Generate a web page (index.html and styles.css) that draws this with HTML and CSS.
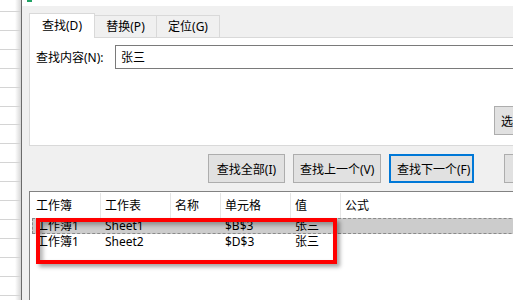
FILE: index.html
```html
<!DOCTYPE html>
<html lang="zh-CN">
<head>
    <meta charset="UTF-8">
    <meta name="viewport" content="width=device-width, initial-scale=1.0">
    <title>查找和替换</title>
    <link rel="stylesheet" href="styles.css">
</head>
<body>

    <div class="sheet"></div>

    <div class="dialog">
        <div class="titlebar"><span class="app-icon"></span></div>

        <div class="tabs">
            <div class="tab active">查找(D)</div>
            <div class="tab">替换(P)</div>
            <div class="tab tab-wide">定位(G)</div>
        </div>

        <div class="panel">
            <div class="find-row">
                <label for="find-what">查找内容(N):</label>
                <input type="text" id="find-what" value="张三">
            </div>
            <div class="options-row">
                <button class="btn">选项(T) &gt;&gt;</button>
            </div>
        </div>

        <div class="actions">
            <button class="btn btn-all">查找全部(I)</button>
            <button class="btn btn-prev">查找上一个(V)</button>
            <button class="btn btn-next">查找下一个(F)</button>
            <button class="btn btn-close">关闭</button>
        </div>

        <div class="results">
            <div class="list-head">
                <div class="col c1">工作簿</div>
                <div class="col c2">工作表</div>
                <div class="col c3">名称</div>
                <div class="col c4">单元格</div>
                <div class="col c5">值</div>
                <div class="col c6">公式</div>
            </div>
            <div class="list-row selected">
                <div class="col c1">工作簿1</div>
                <div class="col c2">Sheet1</div>
                <div class="col c3"></div>
                <div class="col c4">$B$3</div>
                <div class="col c5">张三</div>
                <div class="col c6"></div>
            </div>
            <div class="list-row">
                <div class="col c1">工作簿1</div>
                <div class="col c2">Sheet2</div>
                <div class="col c3"></div>
                <div class="col c4">$D$3</div>
                <div class="col c5">张三</div>
                <div class="col c6"></div>
            </div>
            <div class="mark"></div>
        </div>
    </div>

</body>
</html>
```

FILE: styles.css
```css
* {
    box-sizing: border-box;
    margin: 0;
    padding: 0;
}

body {
    display: flex;
    width: 513px;
    height: 300px;
    overflow: hidden;
    background: #ffffff;
    font-family: "Noto Sans", "Noto Sans CJK SC", sans-serif;
    font-size: 12px;
    color: #000000;
}

/* spreadsheet peeking out on the left */
.sheet {
    flex: 0 0 22px;
    border-right: 1px solid #6b6b6b;
    background:
        linear-gradient(to right, rgba(255, 255, 255, 0) 15px, #d6d6d6 21px),
        repeating-linear-gradient(to bottom, #ffffff 0, #ffffff 11px, #d4d4d4 11px, #d4d4d4 12px, #ffffff 12px, #ffffff 18.9px);
}

.dialog {
    flex: 0 0 620px;
    display: flex;
    flex-direction: column;
    background: #f0f0f0;
    padding-left: 7px;
}

.titlebar {
    height: 6px;
    margin-left: -7px;
    padding-left: 5px;
    background: #ffffff;
}

.app-icon {
    display: block;
    width: 5px;
    height: 2px;
    background: #21a366;
}

.tabs {
    display: flex;
    align-items: flex-end;
    height: 24px;
    margin-top: 7px;
}

.tab {
    width: 62px;
    height: 22px;
    line-height: 21px;
    text-align: center;
    border: 1px solid #d9d9d9;
    border-bottom: none;
    border-left: none;
    background: #f0f0f0;
}

.tab-wide {
    width: 63px;
}

.tab.active {
    position: relative;
    width: 66px;
    height: 25px;
    margin-bottom: -1px;
    line-height: 24px;
    border-left: 1px solid #d9d9d9;
    background: #ffffff;
}

.panel {
    background: #ffffff;
    border: 1px solid #d9d9d9;
    padding: 7px 0 10px 0;
}

.find-row {
    display: flex;
    align-items: center;
}

.find-row label {
    width: 85px;
    padding-left: 6px;
}

.find-row input {
    flex: 1;
    height: 24px;
    border: 1px solid #7a7a7a;
    padding: 0 5px;
    font: inherit;
    outline: none;
}

.options-row {
    display: flex;
    margin-top: 37px;
    padding-left: 464px;
}

.btn {
    height: 29px;
    padding: 0 6px;
    border: 1px solid #adadad;
    background: #e1e1e1;
    font: inherit;
    color: #000000;
    white-space: nowrap;
}

.actions {
    display: flex;
    gap: 8px;
    margin-top: 8px;
    padding-left: 179px;
}

.btn-all {
    width: 77px;
}

.btn-prev {
    width: 88px;
}

.btn-next {
    width: 85px;
    border: 2px solid #0078d7;
}

.btn-close {
    width: 75px;
    margin-left: 22px;
}

.results {
    position: relative;
    flex: 1;
    margin-top: 8px;
    background: #ffffff;
    border-top: 1px solid #828282;
    border-left: 1px solid #828282;
}

.list-head {
    display: flex;
    height: 26px;
    padding-top: 1px;
}

.list-head .col {
    line-height: 25px;
    border-right: 1px solid #e5e5e5;
}

.list-row {
    display: flex;
    height: 16px;
    line-height: 16px;
}

.list-row.selected {
    margin-left: 2px;
    background: #cccccc;
    outline: 1px dashed #8a8a8a;
    outline-offset: -1px;
}

.col {
    flex: 0 0 auto;
    padding-left: 4px;
    white-space: nowrap;
}

.c1 { width: 71px; padding-left: 6px; }
.c2 { width: 70px; }
.c3 { width: 50px; }
.c4 { width: 70px; }
.c5 { width: 50px; }
.c6 { flex: 1; border-right: none !important; }

.list-row.selected .c1 {
    width: 69px;
    padding-left: 4px;
}

/* red annotation box drawn over the results */
.mark {
    position: absolute;
    left: 6px;
    top: 26px;
    width: 301px;
    height: 46px;
    border: 4px solid #ff0000;
    box-shadow: 3px 3px 4px rgba(0, 0, 0, 0.35), inset 3px 3px 4px rgba(0, 0, 0, 0.3);
}
```
